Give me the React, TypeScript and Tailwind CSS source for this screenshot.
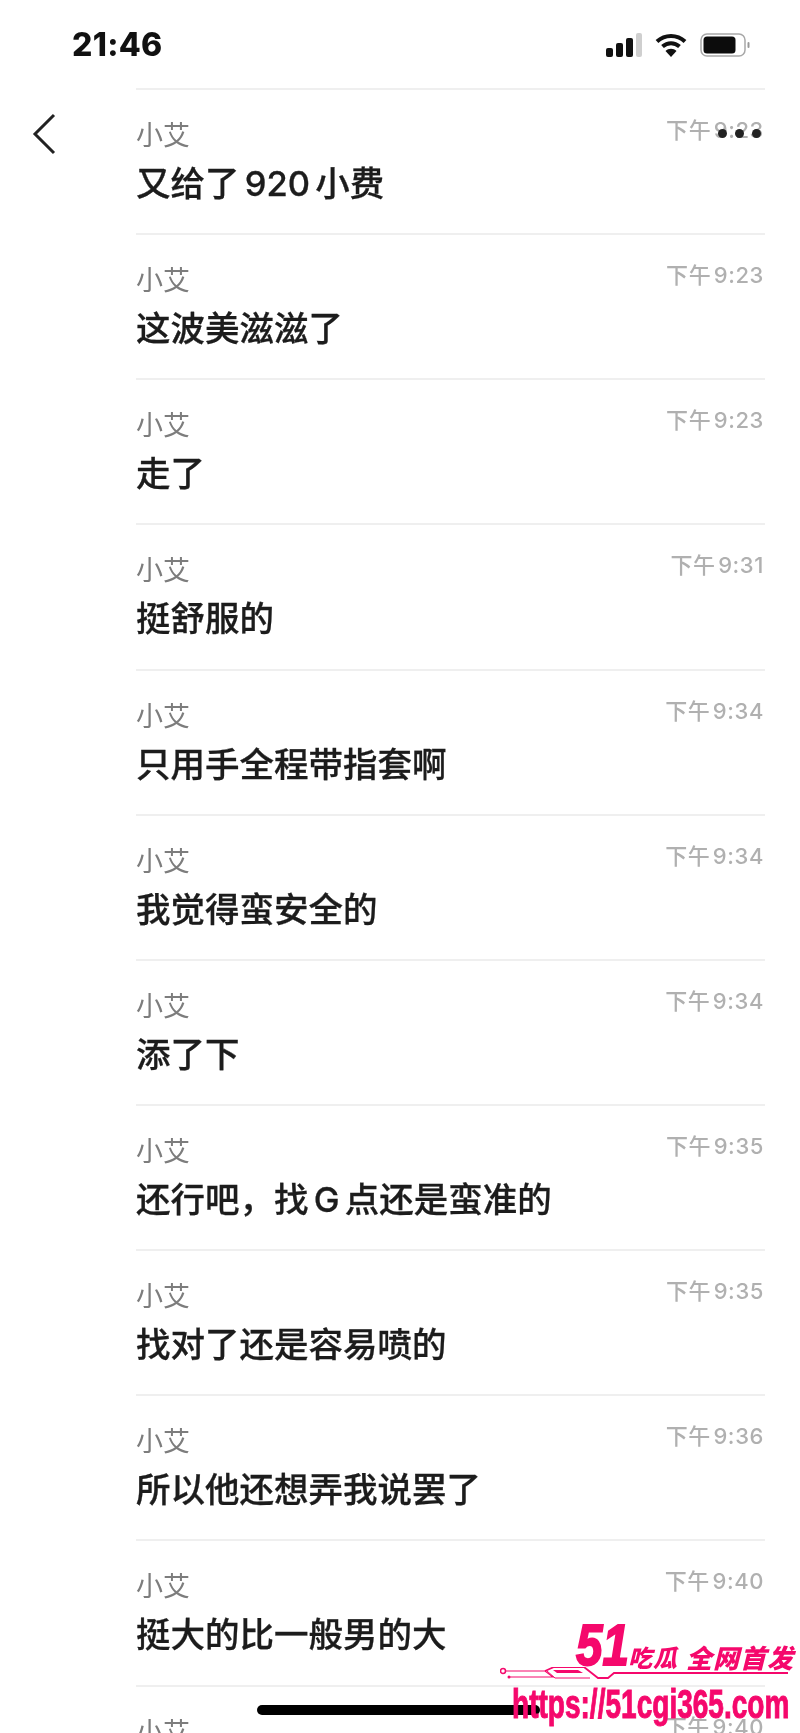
const rows = [
  ["又给了 920 小费", "下午 9:23"],
  ["这波美滋滋了", "下午 9:23"],
  ["走了", "下午 9:23"],
  ["挺舒服的", "下午 9:31"],
  ["只用手全程带指套啊", "下午 9:34"],
  ["我觉得蛮安全的", "下午 9:34"],
  ["添了下", "下午 9:34"],
  ["还行吧，找 G 点还是蛮准的", "下午 9:35"],
  ["找对了还是容易喷的", "下午 9:35"],
  ["所以他还想弄我说罢了", "下午 9:36"],
  ["挺大的比一般男的大", "下午 9:40"],
  ["", "下午 9:40"],
];

function Row({ text, time }: { text: string; time: string }) {
  return (
    <div className="h-[145.15px] border-t-2 border-[#efefef] pt-[28px]">
      <div className="flex items-start justify-between">
        <span className="text-[27px] leading-[36px] text-[#7d7d7d]">小艾</span>
        <span className="-mt-[4px] pr-[1px] text-[22px] font-medium leading-[32px] tracking-[0.6px] text-[#b0b0b0] [word-spacing:-4px]">{time}</span>
      </div>
      <div className="mt-[10px] text-[34.5px] font-medium leading-[40px] text-[#1c1c1c] [word-spacing:-4px] [-webkit-text-stroke:0.3px_#1c1c1c]">{text}</div>
    </div>
  );
}

export default function App() {
  return (
    <div className="relative h-[1733px] w-[800px] overflow-hidden bg-white font-['Inter','Noto_Sans_CJK_SC',sans-serif] blur-[0.5px]">
      <header className="flex h-[88px] items-center justify-between pt-[2px] pl-[72px] pr-[50px]">
        <span className="text-[32px] font-extrabold leading-none tracking-[0.3px] text-[#111111]">21:46</span>
        <div className="flex items-center gap-[13px]">
          <svg width="36" height="24" viewBox="0 0 36 24">
            <rect x="0" y="15" width="7" height="9" rx="2" fill="#111" />
            <rect x="10" y="10" width="7" height="14" rx="2" fill="#111" />
            <rect x="20" y="5" width="7" height="19" rx="2" fill="#111" />
            <rect x="30" y="0" width="6" height="24" rx="2" fill="#cfcfcf" />
          </svg>
          <svg width="32" height="24" viewBox="0 0 32 24" fill="none">
            <path d="M2 8.500C10 1 22 1 30 8.500" stroke="#111" strokeWidth="4" />
            <path d="M7.500 13.500C12.500 9 19.500 9 24.500 13.500" stroke="#111" strokeWidth="4" />
            <path d="M16 24l-5.500-6C13.500 15 18.500 15 21.500 18z" fill="#111" />
          </svg>
          <svg width="50" height="24" viewBox="0 0 50 24" fill="none">
            <rect x="1" y="1" width="44" height="22" rx="6" stroke="#a8a8a8" strokeWidth="1.500" />
            <rect x="3.500" y="3.500" width="32" height="17" rx="3.500" fill="#0c0c0c" />
            <rect x="47.500" y="9" width="2" height="6" rx="1" fill="#999" />
          </svg>
        </div>
      </header>

      <main className="ml-[136px] mr-[35px]">
        {rows.map((r, i) => (
          <Row key={i} text={r[0]} time={r[1]} />
        ))}
      </main>

      <svg className="absolute left-[30px] top-[112px]" width="30" height="44" viewBox="0 0 30 44" fill="none">
        <path d="M24 3L5 22l19 19" stroke="#222" strokeWidth="3" />
      </svg>
      <div className="absolute left-[718px] top-[129px] flex gap-[8px]">
        <span className="h-[9px] w-[9px] rounded-full bg-[#222222]" />
        <span className="h-[9px] w-[9px] rounded-full bg-[#222222]" />
        <span className="h-[9px] w-[9px] rounded-full bg-[#222222]" />
      </div>

      <div className="absolute left-[257px] top-[1705px] h-[10px] w-[283px] rounded-full bg-black" />

      <div className="absolute left-[500px] top-[1622px] h-[100px] w-[300px] text-[#f5086c]">
        <span className="absolute left-[76px] top-[-6px] origin-left scale-x-[0.82] text-[58px] font-black italic leading-[58px] font-['Liberation_Sans',sans-serif] [-webkit-text-stroke:2px_#f5086c]">51</span>
        <span className="absolute left-[128px] top-[24px] text-[24px] font-black italic leading-[26px] tracking-[1px]">吃瓜</span>
        <span className="absolute left-[186px] top-[24px] text-[26px] font-black italic leading-[26px] tracking-[1px]">全网首发</span>
        <svg className="absolute left-0 top-[45px]" width="292" height="20" viewBox="0 0 292 20" fill="none">
          <circle cx="3" cy="4" r="2.500" stroke="#f5086c" strokeWidth="1.500" />
          <circle cx="9" cy="10" r="1.500" fill="#f5086c" />
          <path d="M5 4H45L53 10H9" stroke="#f5086c" strokeWidth="1.200" />
          <path d="M45 4L54 0H84L98 11H108L114 6H288" stroke="#f5086c" strokeWidth="1.800" />
          <path d="M47 4L55 11H90" stroke="#f5086c" strokeWidth="1" />
          <path d="M53 3H78L83 6H57z" fill="#f5086c" />
        </svg>
        <span className="absolute left-[12px] top-[63px] origin-left scale-x-[0.684] whitespace-nowrap text-[41px] font-bold leading-[38px] font-['Liberation_Sans',sans-serif] [-webkit-text-stroke:1px_#f5086c]">https://51cgi365.com</span>
      </div>
    </div>
  );
}
